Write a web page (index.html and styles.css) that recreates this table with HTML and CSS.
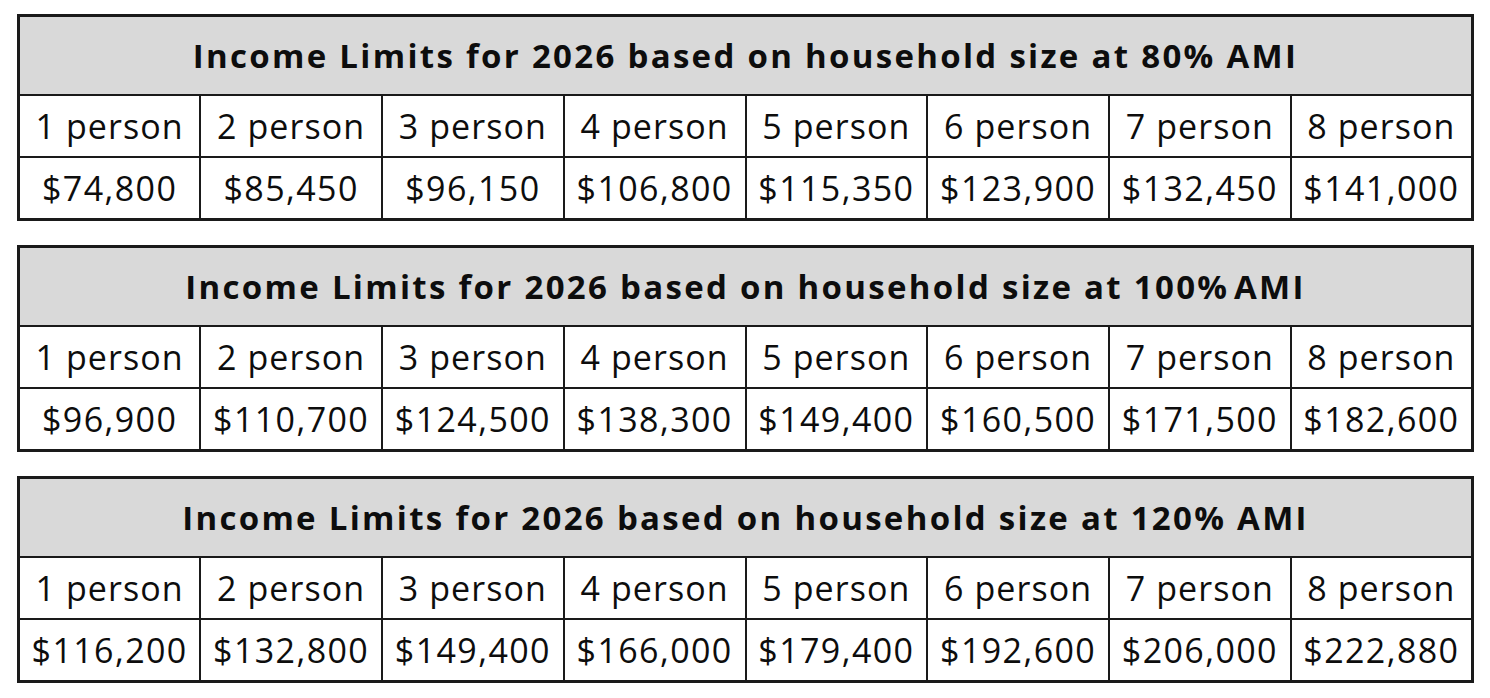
FILE: index.html
```html
<!DOCTYPE html>
<html lang="en">
<head>
<meta charset="utf-8">
<title>Income Limits 2026</title>
<link rel="stylesheet" href="styles.css">
</head>
<body>
<main class="page">
  <table class="limits">
    <thead>
      <tr><th colspan="8" class="title">Income Limits for 2026 based on household size at 80% AMI</th></tr>
    </thead>
    <tbody>
      <tr class="sizes"><td>1 person</td><td>2 person</td><td>3 person</td><td>4 person</td><td>5 person</td><td>6 person</td><td>7 person</td><td>8 person</td></tr>
      <tr class="values"><td>$74,800</td><td>$85,450</td><td>$96,150</td><td>$106,800</td><td>$115,350</td><td>$123,900</td><td>$132,450</td><td>$141,000</td></tr>
    </tbody>
  </table>
  <table class="limits">
    <thead>
      <tr><th colspan="8" class="title">Income Limits for 2026 based on household size at 100%<span class="tight"> </span>AMI</th></tr>
    </thead>
    <tbody>
      <tr class="sizes"><td>1 person</td><td>2 person</td><td>3 person</td><td>4 person</td><td>5 person</td><td>6 person</td><td>7 person</td><td>8 person</td></tr>
      <tr class="values"><td>$96,900</td><td>$110,700</td><td>$124,500</td><td>$138,300</td><td>$149,400</td><td>$160,500</td><td>$171,500</td><td>$182,600</td></tr>
    </tbody>
  </table>
  <table class="limits">
    <thead>
      <tr><th colspan="8" class="title">Income Limits for 2026 based on household size at 120% AMI</th></tr>
    </thead>
    <tbody>
      <tr class="sizes"><td>1 person</td><td>2 person</td><td>3 person</td><td>4 person</td><td>5 person</td><td>6 person</td><td>7 person</td><td>8 person</td></tr>
      <tr class="values"><td>$116,200</td><td>$132,800</td><td>$149,400</td><td>$166,000</td><td>$179,400</td><td>$192,600</td><td>$206,000</td><td>$222,880</td></tr>
    </tbody>
  </table>
</main>
</body>
</html>
```

FILE: styles.css
```css
html, body {
  margin: 0;
  padding: 0;
  background: #ffffff;
}

.page {
  padding: 14px 0 0 17px;
  display: flex;
  flex-direction: column;
  gap: 24px;
  font-family: "Open Sans", "Liberation Sans", sans-serif;
  color: #0d0d0d;
}

.limits {
  width: 1457px;
  border-collapse: collapse;
  table-layout: fixed;
  border: 3px solid #1a1a1a;
}

.limits th,
.limits td {
  border: 2px solid #1a1a1a;
  text-align: center;
  vertical-align: middle;
  padding: 0;
  white-space: nowrap;
  overflow: hidden;
}

.title {
  background: #d9d9d9;
  height: 77px;
  font-weight: 700;
  font-size: 33px;
  letter-spacing: 2.3px;
}

.tight {
  letter-spacing: -4px;
}

.sizes td,
.values td {
  height: 60px;
  font-size: 34px;
  font-weight: 400;
  letter-spacing: 1.1px;
}

.values td {
  letter-spacing: 1.4px;
}
```
